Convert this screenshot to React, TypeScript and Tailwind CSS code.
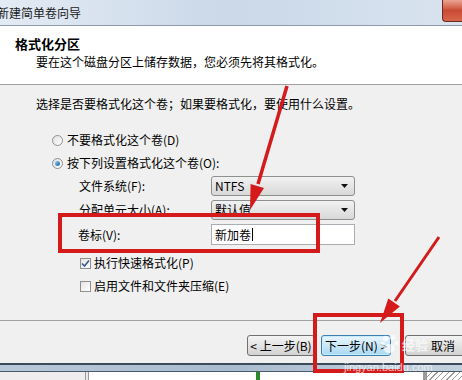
import React from "react";

const font = { fontFamily: '"Noto Sans CJK SC", "Noto Sans", sans-serif' };

const Radio = ({ checked }: { checked?: boolean }) => (
  <div className="w-[11px] h-[11px] rounded-full border border-[#8f8f8f] bg-gradient-to-br from-[#e0e0e0] to-[#ffffff] flex items-center justify-center shrink-0">
    {checked && (
      <div className="w-[5px] h-[5px] rounded-full bg-gradient-to-br from-[#8ad0f4] to-[#1c5fa0]" />
    )}
  </div>
);

const Check = ({ checked }: { checked?: boolean }) => (
  <div className="w-[11px] h-[11px] border border-[#8f8f8f] bg-gradient-to-br from-[#e4e4e4] to-[#ffffff] flex items-center justify-center shrink-0">
    {checked && (
      <svg width="9" height="9" viewBox="0 0 9 9">
        <path d="M1 4.5 L3.5 7 L8 1.5" stroke="#3a5a8c" strokeWidth="1.6" fill="none" />
      </svg>
    )}
  </div>
);

const Combo = ({ value }: { value: string }) => (
  <div className="w-[144px] h-[20px] rounded-[3px] border border-[#8e8f8f] bg-gradient-to-b from-[#f2f2f2] to-[#d8d8d8] flex items-center justify-between pl-[3px] pr-[6px]">
    <span className="text-[12px] leading-none text-black">{value}</span>
    <svg width="7" height="4" viewBox="0 0 7 4">
      <path d="M0 0 H7 L3.5 4 Z" fill="#111" />
    </svg>
  </div>
);

export default function App() {
  return (
    <div
      className="relative w-[462px] h-[380px] overflow-hidden bg-[#f0f0f0] flex flex-col text-black"
      style={font}
    >
      {/* title bar */}
      <div className="h-[26px] shrink-0 bg-gradient-to-r from-[#e3ebf4] via-[#cad8e8] to-[#d9e4ef] border-b border-[#8d9bab] flex items-center justify-between">
        <span className="ml-[-3px] text-[12px] leading-none text-[#1a1a1a]">新建简单卷向导</span>
        <div className="self-start w-[20px] h-[22px] rounded-bl-[4px] border-l border-b border-[#6b2a22] bg-gradient-to-b from-[#e9a493] via-[#c94a32] to-[#d8664a]" />
      </div>

      {/* header */}
      <div className="h-[59px] shrink-0 bg-white border-b border-[#a0a0a0] pl-[15px] pt-[10px]">
        <div className="text-[13px] font-bold leading-[16px]">格式化分区</div>
        <div className="ml-[21px] mt-[2px] text-[12px] leading-[16px]">要在这个磁盘分区上储存数据，您必须先将其格式化。</div>
      </div>

      {/* body */}
      <div className="h-[235px] shrink-0 pl-[36px] pt-[11px] text-[12px]">
        <div className="leading-[16px]">选择是否要格式化这个卷；如果要格式化，要使用什么设置。</div>
        <div className="mt-[20px] ml-[16px] flex items-center gap-[4px] h-[16px]">
          <Radio />
          <span className="leading-none">不要格式化这个卷(D)</span>
        </div>
        <div className="mt-[7px] ml-[16px] flex items-center gap-[4px] h-[16px]">
          <Radio checked />
          <span className="leading-none">按下列设置格式化这个卷(O):</span>
        </div>
        <div className="mt-[5px] ml-[43px] flex items-center h-[20px]">
          <span className="w-[132px] leading-none">文件系统(F):</span>
          <Combo value="NTFS" />
        </div>
        <div className="mt-[4px] ml-[43px] flex items-center h-[20px]">
          <span className="w-[132px] leading-none">分配单元大小(A):</span>
          <Combo value="默认值" />
        </div>
        <div className="mt-[4px] ml-[42px] flex items-center h-[21px]">
          <span className="w-[133px] leading-none">卷标(V):</span>
          <div className="w-[144px] h-[21px] border border-[#abadb3] bg-white flex items-center pl-[3px]">
            <span className="leading-none">新加卷</span>
            <div className="w-px h-[13px] bg-black ml-px" />
          </div>
        </div>
        <div className="mt-[10px] ml-[44px] flex items-center gap-[3px] h-[16px]">
          <Check checked />
          <span className="leading-none">执行快速格式化(P)</span>
        </div>
        <div className="mt-[7px] ml-[44px] flex items-center gap-[3px] h-[16px]">
          <Check />
          <span className="leading-none">启用文件和文件夹压缩(E)</span>
        </div>
      </div>

      {/* footer */}
      <div className="h-[43px] shrink-0 border-t border-[#a0a0a0] flex items-start pt-[14px] pl-[247px] gap-[6px] text-[12px]">
        <div className="w-[68px] h-[21px] shrink-0 rounded-[3px] border border-[#707070] bg-gradient-to-b from-[#f4f4f4] to-[#d2d2d2] flex items-center justify-center leading-none">
          &lt; 上一步(B)
        </div>
        <div className="w-[70px] h-[21px] shrink-0 rounded-[3px] border border-[#3c7fb1] bg-gradient-to-b from-[#eaf6fd] to-[#a7d9f5] shadow-[inset_0_0_0_1px_#c8ecfb] flex items-center justify-center leading-none">
          下一步(N) &gt;
        </div>
        <div className="w-[72px] h-[21px] shrink-0 ml-[8px] rounded-[3px] border border-[#707070] bg-gradient-to-b from-[#f4f4f4] to-[#d2d2d2] flex items-center pl-[25px] leading-none">
          取消
        </div>
      </div>

      {/* strip below window */}
      <div className="h-[2px] shrink-0 bg-[#3d4a5b]" />
      <div className="h-[6px] shrink-0 bg-gradient-to-r from-[#b7c8d9] via-[#a9bccf] to-[#c3d1de]" />
      <div className="h-px shrink-0 bg-[#4a5868]" />
      <div className="flex-1 flex bg-white">
        <div className="w-[85px] bg-[#efeded]" />
        <div className="w-px bg-[#9a9a9a]" />
        <div className="w-[2px] bg-[#e8e8e8]" />
        <div className="w-px bg-[#9a9a9a]" />
        <div className="w-[167px]" />
        <div className="w-[4px] bg-[#2c8a2c]" />
        <div className="w-[163px]" />
        <div className="w-[4px] bg-[#9c9c9c]" />
        <div className="flex-1 bg-[repeating-linear-gradient(135deg,#ffffff_0px,#ffffff_3px,#9a9a9a_3px,#9a9a9a_4px)]" />
      </div>

      {/* annotations */}
      <svg className="absolute inset-0 pointer-events-none" width="462" height="380" viewBox="0 0 462 380">
        <rect x="60" y="215" width="258" height="36" fill="none" stroke="#d41a1a" strokeWidth="4" />
        <rect x="315" y="315" width="87" height="56" fill="none" stroke="#d41a1a" strokeWidth="4" />
        <line x1="287" y1="86" x2="258" y2="184" stroke="#d41a1a" strokeWidth="3.5" />
        <polygon points="250,210 264,188 250.6,184" fill="#d41a1a" />
        <line x1="439" y1="237" x2="395" y2="301" stroke="#d41a1a" strokeWidth="3" />
        <polygon points="380,323 399.9,306.4 388.3,298.4" fill="#d41a1a" />
      </svg>

      {/* watermark */}
      <div className="absolute left-[380px] top-[334px] pointer-events-none opacity-70 flex items-center">
        <svg width="20" height="20" viewBox="0 0 22 22">
          <circle cx="6" cy="5" r="3" fill="#ffffff" />
          <circle cx="14" cy="4" r="3" fill="#ffffff" />
          <circle cx="3" cy="11" r="2.5" fill="#ffffff" />
          <circle cx="18" cy="10" r="2.5" fill="#ffffff" />
          <ellipse cx="10" cy="16" rx="6" ry="5" fill="#ffffff" />
        </svg>
        <span className="ml-[2px] text-[13px] font-bold leading-none text-white">经验</span>
      </div>
      <div className="absolute left-[344px] top-[362px] pointer-events-none text-[11px] leading-none text-white opacity-70" style={{ fontFamily: '"Liberation Sans", sans-serif' }}>
        jingyan.baidu.com
      </div>
    </div>
  );
}
